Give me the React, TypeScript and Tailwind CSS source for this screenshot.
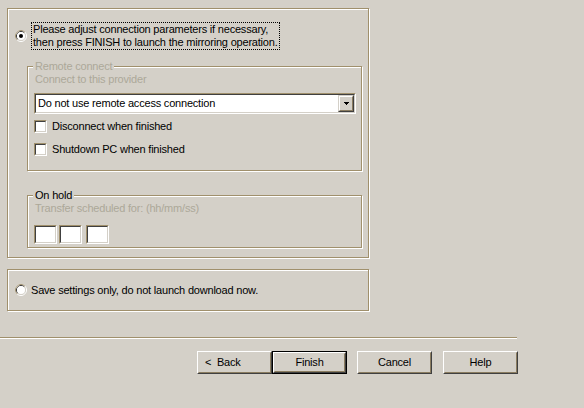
import React from "react";

const GROUP = "border border-[#a0906c] shadow-[inset_1px_1px_0_#ffffff,1px_1px_0_#ffffff]";

function Radio({ checked }: { checked?: boolean }) {
  return (
    <svg width="12" height="12" viewBox="0 0 12 12" className="shrink-0">
      <circle cx="6" cy="6" r="5.5" fill="none" stroke="#ffffff" />
      <path d="M2.11 9.89 A5.5 5.5 0 0 1 9.89 2.11" fill="none" stroke="#a0906c" />
      <circle cx="6" cy="6" r="4.5" fill="none" stroke="#d4d0c8" />
      <path d="M2.82 9.18 A4.5 4.5 0 0 1 9.18 2.82" fill="none" stroke="#404040" />
      <circle cx="6" cy="6" r="4" fill="#ffffff" />
      {checked && <circle cx="6" cy="6" r="2" fill="#000000" />}
    </svg>
  );
}

function Sunken({ className, children }: { className?: string; children?: React.ReactNode }) {
  return (
    <div className={"border border-t-[#a0906c] border-l-[#a0906c] border-b-white border-r-white " + (className ?? "")}>
      <div className="h-full w-full border border-t-[#404040] border-l-[#404040] border-b-[#d4d0c8] border-r-[#d4d0c8] bg-white flex items-center">
        {children}
      </div>
    </div>
  );
}

function Check({ label }: { label: string }) {
  return (
    <div className="flex items-center h-[13px] ml-[6px]">
      <Sunken className="w-[13px] h-[13px] shrink-0" />
      <span className="ml-[5px] leading-[13px]">{label}</span>
    </div>
  );
}

function Button({ label, def, className, left }: { label: string; def?: boolean; className?: string; left?: boolean }) {
  return (
    <div className={"w-[75px] h-[23px] " + (def ? "border border-black " : "") + (className ?? "")}>
      <div className="h-full w-full border border-t-white border-l-white border-b-[#404040] border-r-[#404040]">
        <div
          className={
            "h-full w-full border border-t-[#d4d0c8] border-l-[#d4d0c8] border-b-[#8a7c60] border-r-[#8a7c60] flex items-center leading-[13px] whitespace-pre " +
            (left ? "justify-start pl-[6px]" : "justify-center")
          }
        >
          {label}
        </div>
      </div>
    </div>
  );
}

export default function App() {
  return (
    <div className="w-[584px] h-[408px] bg-[#d4d0c8] overflow-hidden pt-[8px] text-[11px] tracking-[-0.2px] text-black font-['Liberation_Sans',Arial,sans-serif]">
      {/* main group */}
      <div className={"ml-[7px] w-[362px] h-[250px] " + GROUP}>
        <div className="flex items-center mt-[13px] ml-[7px]">
          <Radio checked />
          <div className="ml-[4px] border border-dotted border-black px-[1px] leading-[13px]">
            Please adjust connection parameters if necessary,
            <br />
            then press FINISH to launch the mirroring operation.
          </div>
        </div>

        {/* Remote connect */}
        <div className={"relative mt-[16px] ml-[19px] w-[335px] h-[105px] " + GROUP}>
          <span className="absolute -top-[7px] left-[5px] px-[2px] bg-[#d4d0c8] leading-[13px] text-[#aca899]">
            Remote connect
          </span>
          <div className="pt-[6px] pl-[7px] leading-[13px] text-[#aca899]">Connect to this provider</div>
          <Sunken className="mt-[7px] ml-[6px] w-[322px] h-[21px]">
            <span className="flex-1 pl-[2px] leading-[13px]">Do not use remote access connection</span>
            <div className="w-[16px] h-full border border-t-[#d4d0c8] border-l-[#d4d0c8] border-b-[#404040] border-r-[#404040]">
              <div className="h-full w-full border border-t-white border-l-white border-b-[#8a7c60] border-r-[#8a7c60] bg-[#d4d0c8] flex items-center justify-center">
                <svg width="5" height="3" viewBox="0 0 5 3">
                  <rect x="0" y="0" width="5" height="1" fill="#000" />
                  <rect x="1" y="1" width="3" height="1" fill="#000" />
                  <rect x="2" y="2" width="1" height="1" fill="#000" />
                </svg>
              </div>
            </div>
          </Sunken>
          <div className="mt-[6px]">
            <Check label="Disconnect when finished" />
          </div>
          <div className="mt-[10px]">
            <Check label="Shutdown PC when finished" />
          </div>
        </div>

        {/* On hold */}
        <div className={"relative mt-[24px] ml-[19px] w-[335px] h-[53px] " + GROUP}>
          <span className="absolute -top-[7px] left-[5px] px-[2px] bg-[#d4d0c8] leading-[13px]">On hold</span>
          <div className="pt-[6px] pl-[7px] leading-[13px] text-[#aca899]">Transfer scheduled for: (hh/mm/ss)</div>
          <div className="flex mt-[10px] ml-[6px]">
            <Sunken className="w-[23px] h-[19px]" />
            <Sunken className="ml-[2px] w-[23px] h-[19px]" />
            <Sunken className="ml-[4px] w-[23px] h-[19px]" />
          </div>
        </div>
      </div>

      {/* second group */}
      <div className={"mt-[11px] ml-[7px] w-[362px] h-[42px] flex items-center pl-[7px] " + GROUP}>
        <Radio />
        <span className="ml-[4px] leading-[13px]">Save settings only, do not launch download now.</span>
      </div>

      {/* separator */}
      <div className="mt-[26px] w-[517px] h-[2px] border-t border-t-[#a0906c] border-b border-b-white" />

      {/* buttons */}
      <div className="flex mt-[12px] ml-[197px]">
        <Button label="<  Back" left />
        <Button label="Finish" def />
        <Button label="Cancel" className="ml-[10px]" />
        <Button label="Help" className="ml-[11px]" />
      </div>
    </div>
  );
}
